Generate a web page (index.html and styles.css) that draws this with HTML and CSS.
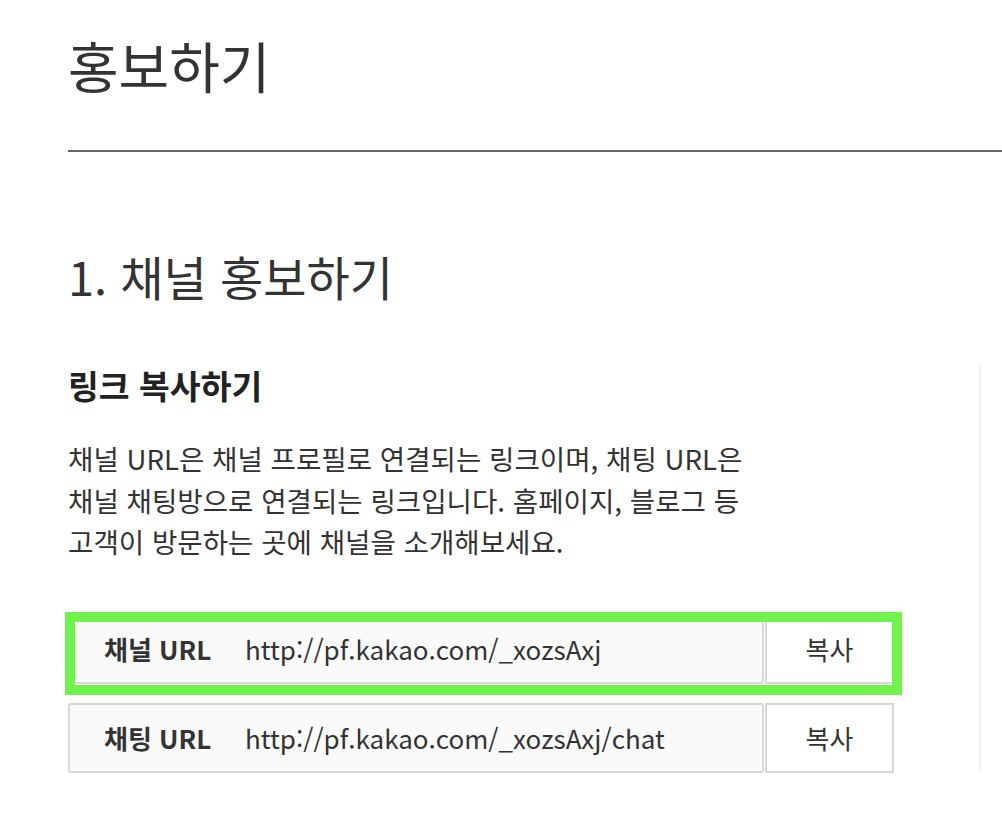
FILE: index.html
```html
<!DOCTYPE html>
<html lang="ko">
<head>
<meta charset="utf-8">
<title>홍보하기</title>
<link rel="stylesheet" href="styles.css">
</head>
<body>
<div class="page">
  <h1 class="title">홍보하기</h1>
  <hr class="rule">
  <h2 class="section">1. 채널 홍보하기</h2>
  <div class="content">
    <div class="main">
      <h3 class="subhead">링크 복사하기</h3>
      <p class="desc">채널 URL은 채널 프로필로 연결되는 링크이며, 채팅 URL은 채널 채팅방으로 연결되는 링크입니다. 홈페이지, 블로그 등 고객이 방문하는 곳에 채널을 소개해보세요.</p>
      <div class="links">
        <div class="link-row is-highlighted">
          <div class="link-field">
            <span class="link-label">채널 URL</span>
            <span class="link-url">http://pf.kakao.com/_xozsAxj</span>
          </div>
          <button class="copy-btn" type="button">복사</button>
        </div>
        <div class="link-row">
          <div class="link-field">
            <span class="link-label">채팅 URL</span>
            <span class="link-url">http://pf.kakao.com/_xozsAxj/chat</span>
          </div>
          <button class="copy-btn" type="button">복사</button>
        </div>
      </div>
    </div>
  </div>
</div>
</body>
</html>
```

FILE: styles.css
```css
html, body {
  margin: 0;
  padding: 0;
  background: #ffffff;
}

body {
  font-family: "Noto Sans CJK KR", "Noto Sans", sans-serif;
  color: #333333;
}

.page {
  padding: 32px 0 0 68px;
}

.title {
  margin: 0;
  font-size: 55px;
  line-height: 64px;
  font-weight: 400;
  color: #333333;
}

.rule {
  margin: 54px 0 0;
  height: 2px;
  border: 0;
  background: #666666;
}

.section {
  margin: 99px 0 0;
  font-size: 47px;
  line-height: 50px;
  font-weight: 400;
  color: #333333;
}

.content {
  display: flex;
  margin-top: 64px;
}

.main {
  width: 911px;
  border-right: 2px solid #f2f2f2;
}

.subhead {
  margin: 0;
  font-size: 33.5px;
  line-height: 40px;
  font-weight: 700;
  color: #222222;
}

.desc {
  margin: 33px 0 0;
  width: 700px;
  font-size: 27.6px;
  line-height: 41.5px;
  font-weight: 400;
  color: #333333;
}

.links {
  margin-top: 51px;
  display: flex;
  flex-direction: column;
  gap: 19px;
}

.link-row {
  display: flex;
  gap: 1px;
  height: 70px;
}

.is-highlighted {
  position: relative;
}

.is-highlighted::after {
  content: "";
  position: absolute;
  left: -3px;
  top: -2px;
  width: 837px;
  height: 83px;
  box-sizing: border-box;
  border: 10px solid #70f24c;
  pointer-events: none;
}

.link-field {
  flex: 0 0 696px;
  box-sizing: border-box;
  display: flex;
  align-items: center;
  padding-left: 34px;
  border: 2px solid #d7d7d7;
  border-radius: 3px;
  background: #fafafa;
  font-size: 26px;
}

.link-label {
  flex: 0 0 141px;
  font-weight: 700;
  color: #333333;
}

.link-url {
  color: #333333;
}

.copy-btn {
  flex: 0 0 129px;
  box-sizing: border-box;
  margin: 0;
  padding: 0;
  border: 2px solid #d7d7d7;
  border-radius: 0;
  background: #ffffff;
  font-family: inherit;
  font-size: 26px;
  color: #333333;
}
```
